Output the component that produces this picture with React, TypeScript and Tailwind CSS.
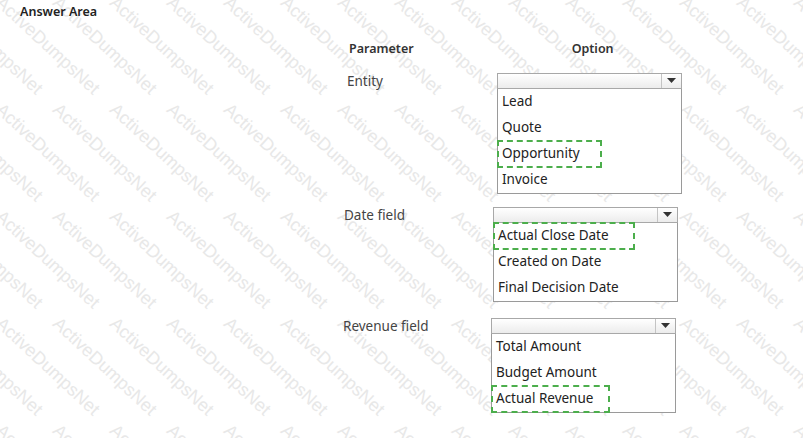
import React from 'react';

type Field = {
  label: string;
  items: string[];
  picked: number;
  ringWidth: number;
  labelLeft: string;
  boxLeft: string;
  top: string;
};

const fields: Field[] = [
  {
    label: 'Entity',
    items: ['Lead', 'Quote', 'Opportunity', 'Invoice'],
    picked: 2,
    ringWidth: 105,
    labelLeft: 'ml-[347px]',
    boxLeft: 'ml-[150px]',
    top: 'mt-[14px]',
  },
  {
    label: 'Date field',
    items: ['Actual Close Date', 'Created on Date', 'Final Decision Date'],
    picked: 0,
    ringWidth: 142,
    labelLeft: 'ml-[344px]',
    boxLeft: 'ml-[149px]',
    top: 'mt-[13px]',
  },
  {
    label: 'Revenue field',
    items: ['Total Amount', 'Budget Amount', 'Actual Revenue'],
    picked: 2,
    ringWidth: 119,
    labelLeft: 'ml-[343px]',
    boxLeft: 'ml-[148px]',
    top: 'mt-[16px]',
  },
];

// diagonal stamp repeated across the sheet
function Watermark() {
  const cells: { x: number; y: number }[] = [];
  for (let r = -1; r < 5; r++) {
    for (let c = -3; c < 15; c++) {
      cells.push({ x: c * 57 + 1, y: r * 107 - 7 });
    }
  }
  return (
    <div className="pointer-events-none absolute inset-0 overflow-hidden">
      {cells.map((p, i) => (
        <span
          key={i}
          className="absolute origin-top-left rotate-[43deg] whitespace-nowrap font-['Liberation_Sans',sans-serif] text-[18px] leading-none text-[#e8e8e8]"
          style={{ left: p.x + 4, top: p.y }}
        >
          ActiveDumpsNet
        </span>
      ))}
    </div>
  );
}

function Dropdown({ f }: { f: Field }) {
  return (
    <div className={`${f.boxLeft} w-[185px]`}>
      <div className="flex h-[16px] border border-[#a8a8a8] bg-gradient-to-b from-white to-[#ececec]">
        <div className="flex-1" />
        <div className="flex w-[20px] items-center justify-center border-l border-[#c4c4c4]">
          <svg width="9" height="5" viewBox="0 0 9 5">
            <path d="M0 0h9L4.5 5z" fill="#333" />
          </svg>
        </div>
      </div>
      <div className="border border-t-0 border-[#9a9a9a] bg-white">
        {f.items.map((item, i) => (
          <div key={item} className="relative flex h-[26px] items-center pl-[4px] text-[13.5px] text-[#222]">
            {item}
            {i === f.picked ? (
              <span
                className="absolute left-[-1px] top-[-1px] h-[28px] border-2 border-dashed border-[#4cae4c]"
                style={{ width: f.ringWidth }}
              />
            ) : null}
          </div>
        ))}
      </div>
    </div>
  );
}

export default function App() {
  return (
    <div className="relative h-[438px] w-[803px] overflow-hidden bg-white font-['Noto_Sans',sans-serif]">
      <Watermark />
      <div className="relative">
        <p className="pl-[20px] pt-[3px] text-[12.5px] font-semibold text-[#222]">Answer Area</p>
        <div className="mt-[18px] flex text-[12.5px] font-semibold text-[#333]">
          <span className="ml-[349px]">Parameter</span>
          <span className="ml-[158px]">Option</span>
        </div>
        {fields.map((f) => (
          <div key={f.label} className={`${f.top} flex items-start`}>
            <span className={`${f.labelLeft} w-0 -translate-y-[2px] whitespace-nowrap text-[13.5px] text-[#444]`}>
              {f.label}
            </span>
            <Dropdown f={f} />
          </div>
        ))}
      </div>
    </div>
  );
}
